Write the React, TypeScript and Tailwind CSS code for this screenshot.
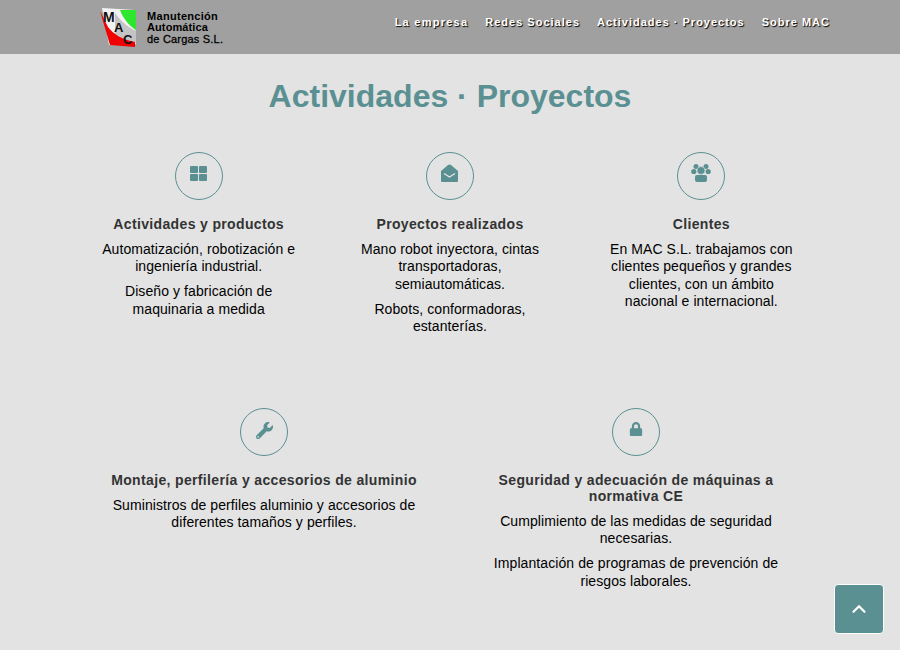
import React from 'react';
import { FaLock, FaWrench } from 'react-icons/fa';
import { ChevronUp } from 'lucide-react';

function GridIcon() {
  return (
    <svg width="17" height="15" viewBox="0 0 17 15" fill="currentColor">
      <rect x="0" y="0" width="8" height="7" rx="1" />
      <rect x="9" y="0" width="8" height="7" rx="1" />
      <rect x="0" y="8" width="8" height="7" rx="1" />
      <rect x="9" y="8" width="8" height="7" rx="1" />
    </svg>
  );
}

function EnvelopeIcon() {
  return (
    <svg width="17" height="18" viewBox="0 0 17 18">
      <path d="M0 7 L7 1 Q8.5 0 10 1 L17 7 V17 Q17 18 16 18 H1 Q0 18 0 17 Z" fill="currentColor" />
      <path d="M3 9.5 L8.5 13 L14 9.5" fill="none" stroke="#e3e3e3" strokeWidth="1.4" />
    </svg>
  );
}

function UsersIcon() {
  return (
    <svg width="20" height="18" viewBox="0 0 20 18" fill="currentColor">
      <circle cx="5" cy="2.5" r="2.5" />
      <circle cx="15" cy="2.5" r="2.5" />
      <circle cx="2.8" cy="7.5" r="2.6" />
      <circle cx="17.2" cy="7.5" r="2.6" />
      <circle cx="10" cy="6.5" r="4" stroke="#e3e3e3" strokeWidth="0.6" />
      <path d="M4 13 Q4 11 6 11 H14 Q16 11 16 13 V16 Q16 18 14 18 H6 Q4 18 4 16 Z" />
    </svg>
  );
}

function Logo() {
  return (
    <div className="flex items-center">
      <svg width="38" height="40" viewBox="0 0 38 40">
        <path d="M3 1 L36 3 L37 37 L10 38 Z" fill="#f2f2f2" />
        <path d="M16 29 C22 33 30 36 37 36 L37 24 C28 20 20 12 16 6 Z" fill="#c4c4c4" />
        <path d="M1 4 L9 20 C14 27 24 33 36 35 L36 40 L11 38 Z" fill="#f00000" />
        <path d="M21 3 L37 3 L37 23 C30 19 24 11 21 3 Z" fill="#2ee62e" />
        <text x="4" y="15" fontSize="14" fontWeight="bold" fontFamily="Liberation Sans" fill="#111">M</text>
        <text x="15" y="25" fontSize="13" fontWeight="bold" fontFamily="Liberation Sans" fill="#111">A</text>
        <text x="24" y="37" fontSize="13" fontWeight="bold" fontFamily="Liberation Sans" fill="#111">C</text>
      </svg>
      <div className="ml-[10px] mt-[2px] text-[11px] leading-[11.5px] font-bold text-black">
        <div className="tracking-[0.3px]">Manutención</div>
        <div className="tracking-[0.1px]">Automática</div>
        <div className="font-normal tracking-[0.2px] [-webkit-text-stroke:0.3px_#000]">de Cargas S.L.</div>
      </div>
    </div>
  );
}

function Feature({ icon, title, lines, className = '' }: { icon: React.ReactNode; title: string; lines: string[]; className?: string }) {
  return (
    <div className={`flex flex-col items-center text-center ${className}`}>
      <div className="w-12 h-12 pb-[6px] rounded-full border border-[#5b9092] flex items-center justify-center text-[#5b9092] text-[16px]">
        {icon}
      </div>
      <h3 className="mt-[16px] text-[14px] leading-[16px] font-bold text-[#333] tracking-[0.35px]">{title}</h3>
      <div className="mt-[8.5px] flex flex-col gap-[7.5px] text-black">
        {lines.map((l) => (
          <p key={l} className="text-[14px] leading-[17.5px] tracking-[0.08px]">{l}</p>
        ))}
      </div>
    </div>
  );
}

export default function App() {
  return (
    <div className="h-[650px] overflow-hidden bg-[#e3e3e3] font-['Liberation_Sans',Arial,sans-serif]">
      <header className="h-[54px] bg-[#a0a0a0] pl-[99px] pr-[70px] flex items-center justify-between">
        <Logo />
        <nav className="flex gap-[17px] text-[11px] font-bold text-white tracking-[1px] [text-shadow:1px_1px_1px_#000] -mt-[9px]">
          <a className="tracking-[1.25px]">La empresa</a>
          <a>Redes Sociales</a>
          <a>Actividades · Proyectos</a>
          <a>Sobre MAC</a>
        </nav>
      </header>

      <h1 className="mt-[23px] text-center text-[32px] leading-[38px] font-bold text-[#5b9092]">Actividades · Proyectos</h1>

      <div className="mt-[37px] mx-auto w-[754px] grid grid-cols-3">
        <Feature
          className="px-[25px]"
          icon={<GridIcon />}
          title="Actividades y productos"
          lines={['Automatización, robotización e ingeniería industrial.', 'Diseño y fabricación de maquinaria a medida']}
        />
        <Feature
          className="px-[25px]"
          icon={<EnvelopeIcon />}
          title="Proyectos realizados"
          lines={['Mano robot inyectora, cintas transportadoras, semiautomáticas.', 'Robots, conformadoras, estanterías.']}
        />
        <Feature
          className="px-[25px]"
          icon={<UsersIcon />}
          title="Clientes"
          lines={['En MAC S.L. trabajamos con clientes pequeños y grandes clientes, con un ámbito nacional e internacional.']}
        />
      </div>

      <div className="mt-[72.5px] mx-auto w-[744px] grid grid-cols-2">
        <Feature
          className="px-[28px]"
          icon={<FaWrench className="text-[17px] mt-[3px]" />}
          title="Montaje, perfilería y accesorios de aluminio"
          lines={['Suministros de perfiles aluminio y accesorios de diferentes tamaños y perfiles.']}
        />
        <Feature
          className="px-[28px]"
          icon={<FaLock className="text-[14px]" />}
          title="Seguridad y adecuación de máquinas a normativa CE"
          lines={['Cumplimiento de las medidas de seguridad necesarias.', 'Implantación de programas de prevención de riesgos laborales.']}
        />
      </div>

      <button className="fixed right-[16px] bottom-[16px] w-[50px] h-[50px] rounded-[4px] border border-white bg-[#5b9092] flex items-center justify-center text-white">
        <ChevronUp size={22} strokeWidth={2.5} />
      </button>
    </div>
  );
}
